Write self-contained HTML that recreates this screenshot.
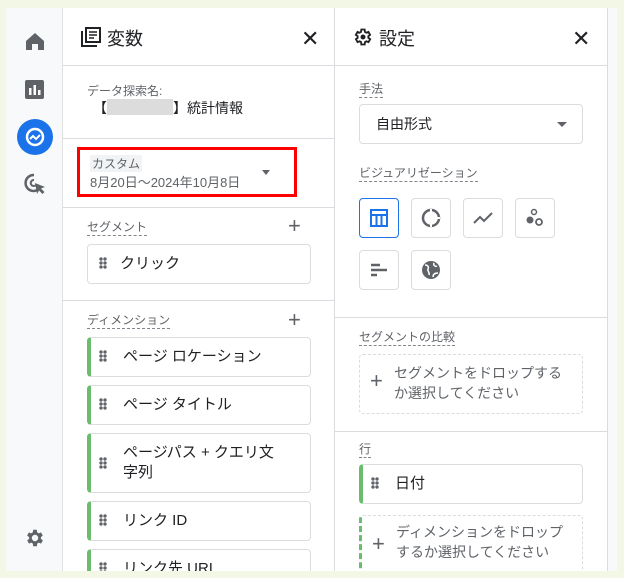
<!DOCTYPE html>
<html><head><meta charset="utf-8"><style>
*{box-sizing:border-box;margin:0;padding:0}
html,body{width:624px;height:578px;overflow:hidden}
body{background:#f3f8e6;position:relative;font-family:"Liberation Sans","Noto Sans CJK JP",sans-serif;color:#202124}
.a{position:absolute}
.side{left:6px;top:8px;width:57px;height:563px;background:#f8f9fa;border-right:1px solid #e0e0e0}
.p1{left:63px;top:8px;width:272px;height:563px;background:#fff;border-right:1px solid #dadce0;overflow:hidden}
.p2{left:335px;top:8px;width:273px;height:563px;background:#fff;border-right:1px solid #dadce0;overflow:hidden}
.strip{left:608px;top:8px;width:9px;height:563px;background:#f8f9fa}
.hl{height:1px;background:#dadce0;position:absolute;left:0;right:0}
.title{font-size:18px;top:17px}
.lbl{font-size:12px;color:#5f6368;border-bottom:1px dashed #80868b;line-height:16px}
.chip{position:absolute;left:24px;width:224px;height:40px;border:1px solid #dadce0;border-radius:4px;font-size:15px;padding-left:32px;line-height:38px;background:#fff}
.chip.g{border-left:4px solid #6bbd6e}
.dots{position:absolute;left:11px;top:12px;width:8px;height:12px;background:radial-gradient(circle,#5f6368 1.6px,transparent 1.9px) 0 0/4px 4px}
.chip.g .dots{left:8px}
.vb{position:absolute;width:40px;height:40px;border:1px solid #dadce0;border-radius:4px;display:flex;align-items:center;justify-content:center}
.x{font-size:22px;color:#202124;top:22px;line-height:18px}
.plus{font-size:22px;color:#5f6368}
.drop{position:absolute;left:24px;width:224px;border:1px dashed #dadce0;border-radius:4px;font-size:14px;color:#5f6368;line-height:20px;padding:8px 0 8px 34px}
.drop b{position:absolute;left:10px;top:50%;margin-top:-13px;font-weight:normal;font-size:22px;color:#5f6368}
</style></head><body>
<div class="a side">
 <svg class="a" style="left:19px;top:24px" width="20" height="18" viewBox="0 0 20 18"><path d="M10 1L1 9v9h6v-6h6v6h6V9z" fill="#5f6368"/></svg>
 <svg class="a" style="left:19px;top:72px" width="19" height="19" viewBox="0 0 19 19"><rect width="19" height="19" rx="2" fill="#5f6368"/><rect x="4" y="8" width="2.5" height="7" fill="#fff"/><rect x="8.5" y="5" width="2.5" height="10" fill="#fff"/><rect x="13" y="10" width="2.5" height="5" fill="#fff"/></svg>
 <div class="a" style="left:11px;top:111px;width:36px;height:36px;border-radius:50%;background:#1a73e8"></div>
 <svg class="a" style="left:18px;top:118px" width="22" height="22" viewBox="0 0 22 22"><circle cx="11" cy="11" r="8" fill="none" stroke="#fff" stroke-width="2.5"/><path d="M6 13l3-3 3 3 4-4" fill="none" stroke="#fff" stroke-width="2"/></svg>
 <svg class="a" style="left:17px;top:164px" width="24" height="24" viewBox="0 0 24 24"><path d="M11 3a8 8 0 1 0 7 11" fill="none" stroke="#5f6368" stroke-width="2.5"/><path d="M11 8a3 3 0 1 0 2 5" fill="none" stroke="#5f6368" stroke-width="2"/><path d="M12 11l10 4-4 1.5 3.5 3.5-2 2-3.5-3.5L14 22z" fill="#5f6368"/></svg>
 <svg class="a" style="left:18px;top:519px" width="22" height="22" viewBox="0 0 24 24"><path fill="#5f6368" d="M19.4 13a7.5 7.5 0 0 0 0-2l2.1-1.6-2-3.5-2.5 1a7 7 0 0 0-1.7-1L15 3h-4l-.4 2.9a7 7 0 0 0-1.7 1l-2.5-1-2 3.5L6.6 11a7.5 7.5 0 0 0 0 2l-2.1 1.6 2 3.5 2.5-1a7 7 0 0 0 1.7 1L11 21h4l.4-2.9a7 7 0 0 0 1.7-1l2.5 1 2-3.5zM13 15.5a3.5 3.5 0 1 1 0-7 3.5 3.5 0 0 1 0 7z" transform="translate(-1 0)"/></svg>
</div>
<div class="a p1">
 <svg class="a" style="left:18px;top:19px" width="20" height="20" viewBox="0 0 20 20"><path d="M1 4v15h15" fill="none" stroke="#202124" stroke-width="2"/><rect x="5" y="1" width="14" height="14" fill="none" stroke="#202124" stroke-width="2"/><path d="M8 5h8M8 8h8M8 11h5" stroke="#202124" stroke-width="1.6"/></svg>
 <div class="a title" style="left:44px">変数</div>
 <div class="a x" style="left:238px">✕</div>
 <div class="hl" style="top:57px"></div>
 <div class="a" style="left:24px;top:74px;font-size:12px;color:#5f6368">データ探索名:</div>
 <div class="a" style="left:30px;top:90px;font-size:14px">【<span style="display:inline-block;width:66px;height:16px;background:#dcdcdc;vertical-align:-2px"></span>】統計情報</div>
 <div class="hl" style="top:130px"></div>
 <div class="a" style="left:14px;top:139px;width:220px;height:50px;border:3px solid #f00"></div>
 <div class="a" style="left:27px;top:147px;font-size:12px;color:#5f6368;background:#f1f3f4;padding:0 2px">カスタム</div>
 <div class="a" style="left:27px;top:164px;font-size:13px;color:#5f6368">8月20日～2024年10月8日</div>
 <div class="a" style="left:199px;top:162px;border:4px solid transparent;border-top:5px solid #5f6368"></div>
 <div class="hl" style="top:199px"></div>
 <div class="a lbl" style="left:24px;top:211px">セグメント</div>
 <div class="a plus" style="left:225px;top:205px">+</div>
 <div class="chip" style="top:236px"><span class="dots"></span>クリック</div>
 <div class="hl" style="top:292px"></div>
 <div class="a lbl" style="left:24px;top:304px">ディメンション</div>
 <div class="a plus" style="left:225px;top:299px">+</div>
 <div class="chip g" style="top:329px"><span class="dots"></span>ページ ロケーション</div>
 <div class="chip g" style="top:377px"><span class="dots"></span>ページ タイトル</div>
 <div class="chip g" style="top:425px;height:60px;line-height:20px;padding-top:9px"><span class="dots" style="top:23px"></span>ページパス + クエリ文<br>字列</div>
 <div class="chip g" style="top:493px"><span class="dots"></span>リンク ID</div>
 <div class="chip g" style="top:541px"><span class="dots"></span>リンク先 URL</div>
</div>
<div class="a p2">
 <svg class="a" style="left:18px;top:19px" width="20" height="20" viewBox="0 0 24 24"><path fill="none" stroke="#202124" stroke-width="2.2" d="M19.4 13a7.5 7.5 0 0 0 0-2l2.1-1.6-2-3.5-2.5 1a7 7 0 0 0-1.7-1L15 3h-4l-.4 2.9a7 7 0 0 0-1.7 1l-2.5-1-2 3.5L6.6 11a7.5 7.5 0 0 0 0 2l-2.1 1.6 2 3.5 2.5-1a7 7 0 0 0 1.7 1L11 21h4l.4-2.9a7 7 0 0 0 1.7-1l2.5 1 2-3.5z" transform="translate(-1 0)"/><circle cx="12" cy="12" r="3" fill="#202124"/></svg>
 <div class="a title" style="left:44px">設定</div>
 <div class="a x" style="left:237px">✕</div>
 <div class="hl" style="top:57px"></div>
 <div class="a lbl" style="left:24px;top:73px">手法</div>
 <div class="a" style="left:24px;top:96px;width:224px;height:40px;border:1px solid #dadce0;border-radius:4px;font-size:14px;line-height:38px;padding-left:16px">自由形式<span class="a" style="left:197px;top:17px;border:5px solid transparent;border-top:5px solid #5f6368"></span></div>
 <div class="a lbl" style="left:24px;top:157px">ビジュアリゼーション</div>
 <div class="vb" style="left:24px;top:190px;border-color:#1a73e8"><svg width="18" height="18" viewBox="0 0 18 18"><rect x="1" y="1" width="16" height="16" fill="none" stroke="#1a73e8" stroke-width="2"/><path d="M1 6h16M6.5 6v11M11.5 6v11" stroke="#1a73e8" stroke-width="2"/></svg></div>
 <div class="vb" style="left:76px;top:190px"><svg width="20" height="20" viewBox="0 0 20 20"><circle cx="10" cy="10" r="8" fill="none" stroke="#5f6368" stroke-width="2.5"/><path d="M10 1v18M10 10h9" stroke="#fff" stroke-width="2"/></svg></div>
 <div class="vb" style="left:128px;top:190px"><svg width="20" height="14" viewBox="0 0 20 14"><path d="M1 12l6-6 4 4 8-8" fill="none" stroke="#5f6368" stroke-width="2"/></svg></div>
 <div class="vb" style="left:180px;top:190px"><svg width="20" height="20" viewBox="0 0 20 20"><circle cx="9" cy="4" r="2.5" fill="none" stroke="#5f6368" stroke-width="1.5"/><circle cx="5" cy="12" r="3.5" fill="#5f6368"/><circle cx="14" cy="14" r="3" fill="none" stroke="#5f6368" stroke-width="1.8"/></svg></div>
 <div class="vb" style="left:24px;top:242px"><svg width="16" height="14" viewBox="0 0 16 14"><path d="M0 2h9M0 7h16M0 12h6" stroke="#5f6368" stroke-width="2.6"/></svg></div>
 <div class="vb" style="left:76px;top:242px"><svg width="20" height="20" viewBox="0 0 20 20"><circle cx="10" cy="10" r="9" fill="#5f6368"/><path d="M4 5c3 0 4 2 3 4s2 3 1 6M13 3c-1 2 1 4 3 3M12 17c0-3 2-4 5-4" fill="none" stroke="#fff" stroke-width="1.5"/></svg></div>
 <div class="hl" style="top:309px"></div>
 <div class="a lbl" style="left:24px;top:321px">セグメントの比較</div>
 <div class="drop" style="top:346px;height:60px"><b>+</b>セグメントをドロップする<br>か選択してください</div>
 <div class="hl" style="top:423px"></div>
 <div class="a lbl" style="left:24px;top:433px">行</div>
 <div class="chip g" style="top:456px"><span class="dots"></span>日付</div>
 <div class="drop" style="top:507px;height:70px;border-left:3px dashed #6bbd6e;padding-top:6px"><b style="margin-top:-16px">+</b>ディメンションをドロップ<br>するか選択してください</div>
</div>
<div class="a strip"></div>
</body></html>
